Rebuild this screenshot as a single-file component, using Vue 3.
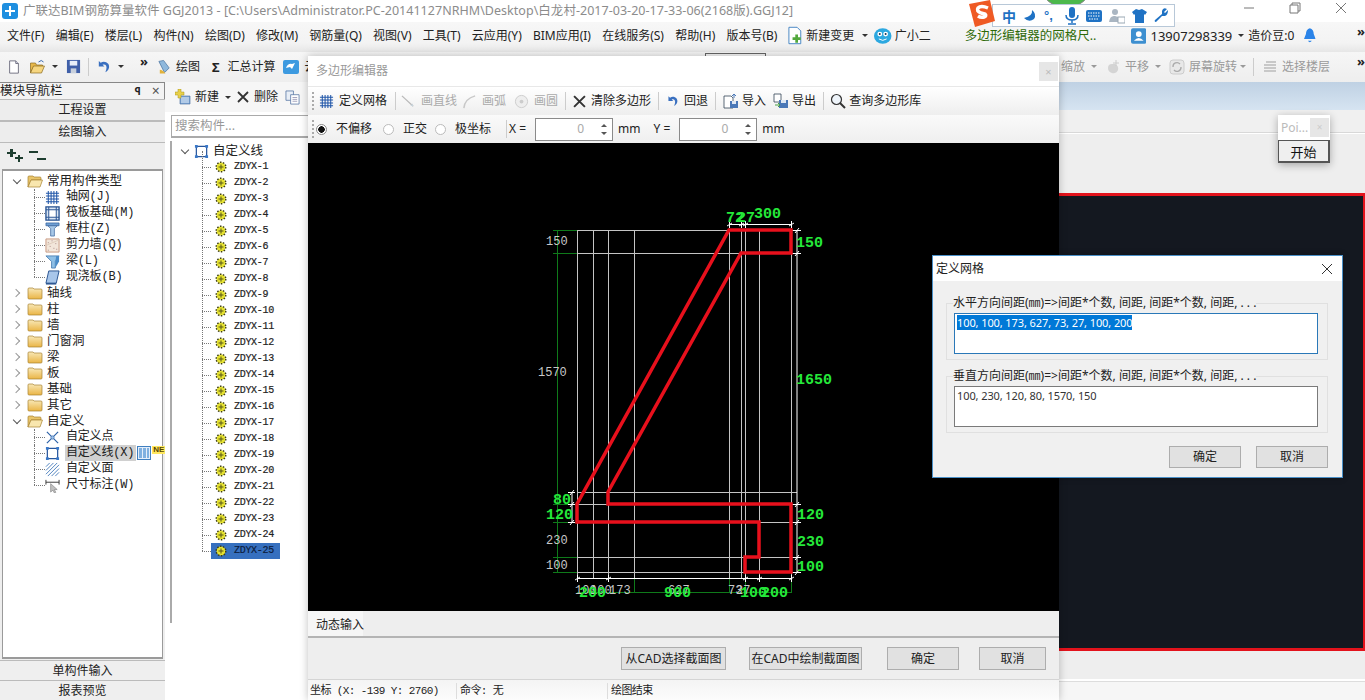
<script setup>
const menus = ["文件(F)", "编辑(E)", "楼层(L)", "构件(N)", "绘图(D)", "修改(M)", "钢筋量(Q)", "视图(V)", "工具(T)", "云应用(Y)", "BIM应用(I)", "在线服务(S)", "帮助(H)", "版本号(B)"]

const typeChildren = [
  { icon: "i-grid", label: "轴网(J)" },
  { icon: "i-raft", label: "筏板基础(M)" },
  { icon: "i-column", label: "框柱(Z)" },
  { icon: "i-wall", label: "剪力墙(Q)" },
  { icon: "i-beam", label: "梁(L)" },
  { icon: "i-slab", label: "现浇板(B)" },
]
const folders = ["轴线", "柱", "墙", "门窗洞", "梁", "板", "基础", "其它"]
const customChildren = [
  { icon: "i-point", label: "自定义点" },
  { icon: "i-poly", label: "自定义线(X)", active: true },
  { icon: "i-hatch", label: "自定义面" },
  { icon: "i-dim", label: "尺寸标注(W)" },
]
const parts = Array.from({ length: 25 }, (_, i) => `ZDYX-${i + 1}`)

const gridX = [577, 593, 608, 634, 729, 741, 745, 759, 791]
const gridY = [230, 253, 492, 504, 522, 557, 572]
const polygon = "729,230 791,230 791,253 741,253 608,492 608,504 791,504 791,572 745,572 745,557 759,557 759,522 577,522 577,504 729,230"
const greenV = [634, 729, 745, 791]
const greenH = [230, 253, 504, 522, 557, 572]
const ticksTop = [729, 741, 745, 791]
const ticksBottom = [577, 608, 745, 759, 791]
const ticksRight = [230, 253, 504, 522, 557, 572]
const ticksLeft = [492, 504, 522]
const grayLabels = [
  { x: 546, y: 245, t: "150" },
  { x: 538, y: 376, t: "1570" },
  { x: 546, y: 544, t: "230" },
  { x: 546, y: 569, t: "100" },
  { x: 575, y: 594, t: "100" },
  { x: 590, y: 594, t: "100" },
  { x: 609, y: 594, t: "173" },
  { x: 668, y: 594, t: "627" },
  { x: 728, y: 594, t: "73" },
  { x: 736, y: 594, t: "27" },
]
const greenLabels = [
  { x: 726, y: 222, t: "72" },
  { x: 737, y: 222, t: "27" },
  { x: 754, y: 218, t: "300" },
  { x: 796, y: 247, t: "150" },
  { x: 796, y: 384, t: "1650" },
  { x: 797, y: 519, t: "120" },
  { x: 797, y: 546, t: "230" },
  { x: 797, y: 571, t: "100" },
  { x: 553, y: 504, t: "80" },
  { x: 546, y: 519, t: "120" },
  { x: 579, y: 597, t: "200" },
  { x: 664, y: 597, t: "900" },
  { x: 740, y: 597, t: "100" },
  { x: 761, y: 597, t: "200" },
]
</script>

<template>
  <div class="app">
    <svg class="defs" width="0" height="0">
      <defs>
        <symbol id="i-new" viewBox="0 0 16 16"><path d="M3 1h7l3 3v11H3z" fill="#fff" stroke="#667" /><path d="M10 1v3h3" fill="#dde" stroke="#667" /></symbol>
        <symbol id="i-open" viewBox="0 0 16 16"><path d="M1 4h5l1 2h6v2H4L1 14z" fill="#e8b84a" stroke="#8a6a20" stroke-width=".7" /><path d="M1 14l3-7h11l-3 7z" fill="#f6d680" stroke="#8a6a20" stroke-width=".7" /><path d="M9 3q3-3 5 0" fill="none" stroke="#3a6ab0" /></symbol>
        <symbol id="i-save" viewBox="0 0 16 16"><path d="M1 1h14v14H1z" fill="#3f5fa8" /><path d="M4 2h8v5H4z" fill="#e8eef8" /><path d="M5 10h6v5H5z" fill="#c8d0dc" /></symbol>
        <symbol id="i-undo" viewBox="0 0 16 16"><path d="M3 2v6h6L7 6c3-1 5 1 4 5l-1 3c4-2 5-6 3-9-2-2-5-3-8-1z" fill="#3a70c0" /></symbol>
        <symbol id="i-paint" viewBox="0 0 16 16"><path d="M2 2l5-1 6 8-5 5z" fill="#8fb8dc" stroke="#3d6a98" stroke-width=".7" /><path d="M3 11q3 0 6 4H3z" fill="#e2b23a" /></symbol>
        <symbol id="i-cloud" viewBox="0 0 16 16"><rect x="0" y="1" width="16" height="14" rx="2" fill="#3d9ae0" /><path d="M3 9q2-5 6-4l3-1-3 6-2-2z" fill="#fff" /></symbol>
        <symbol id="i-grid" viewBox="0 0 16 16"><path d="M1 3.500h14M1 6.500h14M1 9.500h14M1 12.500h14M3.500 1v14M6.500 1v14M9.500 1v14M12.500 1v14" stroke="#1f55a8" stroke-width="1.100" fill="none" /></symbol>
        <symbol id="i-raft" viewBox="0 0 16 16"><path d="M1 1h14v14H1z" fill="#dbe6f3" stroke="#234f90" stroke-width="1.400" /><path d="M4 4h8v8H4z" fill="#fff" stroke="#234f90" /><path d="M1 4h3M12 4h3M1 12h3M12 12h3M4 1v3M12 1v3M4 12v3M12 12v3" stroke="#234f90" /></symbol>
        <symbol id="i-column" viewBox="0 0 16 16"><path d="M1 1h14v3H1z" fill="#6f9fd4" stroke="#2c5a96" stroke-width=".7" /><path d="M3 4h10l-3 3v8H6V7z" fill="#a8c8e8" stroke="#2c5a96" stroke-width=".7" /></symbol>
        <symbol id="i-wall" viewBox="0 0 16 16"><path d="M1 1h14v14H1z" fill="#f2e6da" stroke="#c89880" /><path d="M3 5h1M7 3h1M11 6h1M5 9h1M9 11h1M3 13h1M12 12h1" stroke="#a88" /><path d="M1 8l14-6" stroke="#dcb" /></symbol>
        <symbol id="i-beam" viewBox="0 0 16 16"><path d="M1 2l14 0-4 6v7H7V8z" fill="#8fc0e6" stroke="#3870a8" stroke-width=".8" /><path d="M12 2l3 0v6l-4 7V8z" fill="#4a8cc8" /></symbol>
        <symbol id="i-slab" viewBox="0 0 16 16"><path d="M4 1h11l-3 13H1z" fill="#a8c6ea" stroke="#24508e" /><path d="M1 14h11v1.500H1z" fill="#24508e" /></symbol>
        <symbol id="i-folder" viewBox="0 0 16 14"><path d="M1 3q0-1 1-1h4l1 1h7q1 0 1 1v8q0 1-1 1H2q-1 0-1-1z" fill="url(#fold)" stroke="#a88330" stroke-width=".7" /></symbol>
        <symbol id="i-folder-open" viewBox="0 0 16 14"><path d="M1 3q0-1 1-1h4l1 1h6q1 0 1 1v2H4l-3 7z" fill="#e9c56a" stroke="#a88330" stroke-width=".7" /><path d="M1 13l3-7h11.500L13 13z" fill="#f8e6ae" stroke="#a88330" stroke-width=".7" /></symbol>
        <symbol id="i-gear" viewBox="0 0 12 12"><circle cx="6" cy="6" r="4.500" fill="#e6e230" /><circle cx="6" cy="6" r="4.800" fill="none" stroke="#3c3c10" stroke-width="1.400" stroke-dasharray="1.500 1.500" /><path d="M3.500 6h5M6 3.500v5" stroke="#55551a" stroke-width="1" /></symbol>
        <symbol id="i-point" viewBox="0 0 16 16"><path d="M2 2l12 12M14 2L2 14" stroke="#2d62a8" stroke-width="1.300" /><circle cx="8" cy="8" r="1.800" fill="#9cc0e8" stroke="#2d62a8" stroke-width=".6" /></symbol>
        <symbol id="i-poly" viewBox="0 0 16 16"><path d="M2.500 2.500h11v11h-11z" fill="none" stroke="#26559c" stroke-width="1.300" /><path d="M1 1h3v3H1zM12 1h3v3h-3zM1 12h3v3H1zM12 12h3v3h-3z" fill="#3a78c8" /></symbol>
        <symbol id="i-hatch" viewBox="0 0 16 16"><path d="M1 5l4-4M1 9l8-8M1 13L13 1M3 15L15 3M7 15l8-8M11 15l4-4" stroke="#4a7ebc" fill="none" /></symbol>
        <symbol id="i-dim" viewBox="0 0 16 16"><path d="M1 2v5M15 2v5M1 4.500h14" stroke="#333" fill="none" /><path d="M6 6l0 9 2.500-2 1.500 3 1.500-.7-1.500-3H13z" fill="#c0c0c0" stroke="#777" stroke-width=".6" /></symbol>
        <symbol id="i-line" viewBox="0 0 16 16"><path d="M1 2l12 11" stroke="#b8b8b8" stroke-width="1.300" /><path d="M13 13l-3-.5 2.500-2.500z" fill="#c8d4dc" /></symbol>
        <symbol id="i-arc" viewBox="0 0 16 16"><path d="M2 15Q3 5 14 2" fill="none" stroke="#c8c8c8" stroke-width="1.600" /></symbol>
        <symbol id="i-circle" viewBox="0 0 16 16"><circle cx="8" cy="8" r="6.500" fill="#eee" stroke="#ccc" /><circle cx="8" cy="8" r="2" fill="#ccc" /></symbol>
        <symbol id="i-x" viewBox="0 0 12 12"><path d="M1 1l10 10M11 1L1 11" stroke="#333" stroke-width="1.800" /></symbol>
        <symbol id="i-import" viewBox="0 0 16 16"><path d="M1 3h7l2 2v10H1z" fill="#fff" stroke="#345" stroke-width=".8" /><path d="M7 8h8v7H7z" fill="#4a78b8" /><path d="M9 8h4v3H9z" fill="#dfe8f4" /><path d="M11 5V1M9 3l2-2 2 2" fill="none" stroke="#4a78b8" /></symbol>
        <symbol id="i-export" viewBox="0 0 16 16"><path d="M1 1h7v8H1z" fill="#fff" stroke="#345" stroke-width=".8" /><path d="M6 7h9v8H6z" fill="#4a78b8" /><path d="M8 7h5v3H8z" fill="#dfe8f4" /><path d="M2 12h4M5 10l2 2-2 2" fill="none" stroke="#48a048" /></symbol>
        <symbol id="i-search" viewBox="0 0 16 16"><circle cx="6.500" cy="6.500" r="5" fill="#eef4fa" stroke="#333" stroke-width="1.200" /><path d="M10 10l5 5" stroke="#333" stroke-width="2" /></symbol>
        <symbol id="i-add" viewBox="0 0 16 16"><path d="M5 7h10v8H5z" fill="#7fa8d8" stroke="#44699c" stroke-width=".6" /><path d="M6 9h8M6 11h8M6 13h8" stroke="#fff" stroke-width=".8" /><path d="M3 0h3v3h3v3H6v3H3V6H0V3h3z" fill="#e8d04a" stroke="#a89420" stroke-width=".5" /></symbol>
        <symbol id="i-copy" viewBox="0 0 16 16"><path d="M1 1h8v10H1z" fill="#e8eef6" stroke="#5070a0" stroke-width=".8" /><path d="M6 5h9v10H6z" fill="#fff" stroke="#5070a0" stroke-width=".8" /><path d="M8 8h5M8 10h5M8 12h5" stroke="#88a" stroke-width=".8" /></symbol>
        <symbol id="i-change" viewBox="0 0 16 20"><path d="M1 1h9l4 4v14H1z" fill="#fff" stroke="#3d7fc0" /><path d="M5 12h3V9h3v3h3v3h-3v3H8v-3H5z" fill="#52a83c" /></symbol>
        <symbol id="i-mascot" viewBox="0 0 20 18"><ellipse cx="10" cy="9" rx="9" ry="8" fill="#2ca8e0" /><circle cx="7" cy="7" r="2.500" fill="#fff" /><circle cx="13" cy="7" r="2.500" fill="#fff" /><circle cx="7" cy="7" r="1" fill="#135" /><circle cx="13" cy="7" r="1" fill="#135" /><path d="M6 12q4 3 8 0" fill="none" stroke="#fff" /></symbol>
        <symbol id="i-user" viewBox="0 0 16 16"><rect width="16" height="16" rx="2" fill="#3d8fd0" /><circle cx="8" cy="6" r="3" fill="#fff" /><path d="M3 13q5-6 10 0z" fill="#fff" /></symbol>
        <symbol id="i-bell" viewBox="0 0 12 16"><path d="M6 0q4 1 4 6l2 5H0l2-5q0-5 4-6z" fill="#2b84e8" /><path d="M4 13q2 3 4 0z" fill="#2b84e8" /></symbol>
        <symbol id="i-pan" viewBox="0 0 16 16"><path d="M3 9q0-4 4-4l3 0q4 2 3 6-2 4-6 3-4-1-4-5z" fill="#d4d4d4" /><path d="M11 1v6M8 4h6" stroke="#ccc" /></symbol>
        <symbol id="i-rotate" viewBox="0 0 16 16"><rect x="1" y="1" width="14" height="14" rx="3" fill="#e8e8e8" stroke="#ccc" /><path d="M4 8a4 4 0 0 1 7-3M12 8a4 4 0 0 1-7 3" fill="none" stroke="#aaa" stroke-width="1.300" /></symbol>
        <symbol id="i-floors" viewBox="0 0 16 16"><path d="M4 3h10M2 6h12M2 9h12M2 12h12" stroke="#bbb" stroke-width="1.600" /></symbol>
        <linearGradient id="fold" x1="0" y1="0" x2="0" y2="1"><stop offset="0" stop-color="#f8e8b8" /><stop offset="1" stop-color="#eab545" /></linearGradient>
      </defs>
    </svg>

    <header class="titlebar">
      <span class="app-logo"><svg viewBox="0 0 16 16" width="16" height="16"><rect width="16" height="16" rx="3" fill="#1f8fe0" /><path d="M7 3h2v4h4v2H9v4H7V9H3V7h4z" fill="#fff" /></svg></span>
      <span class="title-text">广联达BIM钢筋算量软件 GGJ2013 - [C:\Users\Administrator.PC-20141127NRHM\Desktop\白龙村-2017-03-20-17-33-06(2168版).GGJ12]</span>
    </header>

    <nav class="menubar">
      <span v-for="m in menus" :key="m" class="menu-item">{{ m }}</span>
      <svg class="ico-change" width="15" height="19"><use href="#i-change" /></svg>
      <span class="menu-item change-label">新建变更</span>
      <span class="caret dark"></span>
      <svg class="ico-mascot" width="20" height="18"><use href="#i-mascot" /></svg>
      <span class="menu-item xiao">广小二</span>
      <span class="hint">多边形编辑器的网格尺..</span>
      <svg class="ico-user" width="16" height="16"><use href="#i-user" /></svg>
      <span class="phone">13907298339</span>
      <span class="caret dark"></span>
      <span class="beans">造价豆:0</span>
      <svg class="ico-bell" width="12" height="16"><use href="#i-bell" /></svg>
      <span class="more">»</span>
    </nav>

    <div class="toolbar">
      <div class="t-left">
        <svg class="t-new" width="14" height="16"><use href="#i-new" /></svg>
        <svg class="t-open" width="17" height="16"><use href="#i-open" /></svg>
        <span class="caret dark t-c1"></span>
        <svg class="t-save" width="15" height="15"><use href="#i-save" /></svg>
        <i class="vsep t-sep"></i>
        <svg class="t-undo" width="15" height="15"><use href="#i-undo" /></svg>
        <span class="caret dark t-c2"></span>
        <span class="more t-more">»</span>
        <svg class="t-paint" width="15" height="16"><use href="#i-paint" /></svg>
        <span class="t-draw">绘图</span>
        <b class="t-sigma">Σ</b>
        <span class="t-sum">汇总计算</span>
        <svg class="t-cloud" width="16" height="16"><use href="#i-cloud" /></svg>
        <span class="t-yun">云</span>
      </div>
      <div class="t-right">
        <span class="zoomtxt">缩放</span><span class="caret"></span>
        <svg class="r-pan" width="16" height="16"><use href="#i-pan" /></svg>
        <span>平移</span><span class="caret"></span>
        <svg class="r-rot" width="16" height="16"><use href="#i-rotate" /></svg>
        <span class="r-rtxt">屏幕旋转</span><span class="caret r-rc"></span>
        <i class="vsep r-sep"></i>
        <svg width="16" height="16"><use href="#i-floors" /></svg>
        <span class="r-ftxt">选择楼层</span>
        <span class="more r-more">»</span>
      </div>
    </div>

    <main class="body">
      <aside class="nav">
        <div class="nav-title">
          <span>模块导航栏</span>
          <span class="pin">ꟼ</span>
          <span class="nav-x">×</span>
        </div>
        <div class="nav-btn first">工程设置</div>
        <div class="nav-btn">绘图输入</div>
        <div class="tree-tools">
          <svg width="19" height="16" viewBox="0 0 19 16"><path d="M3 1h3v3h3v2H6v3H3V6H0V4h3zM11 7h2v2h3v2h-3v3h-2v-3H8V9h3z" fill="#1e3e30" /></svg>
          <svg class="minus" width="19" height="16" viewBox="0 0 19 16"><path d="M0 3h9v2H0zM8 10h9v2H8z" fill="#1e3e30" /></svg>
        </div>
        <div class="tree">
          <div class="node">
            <span class="chev open"></span>
            <svg class="folder" width="16" height="14"><use href="#i-folder-open" /></svg>
            <span class="node-label">常用构件类型</span>
          </div>
          <div v-for="(c, i) in typeChildren" :key="c.label" class="leaf" :class="{ last: i === typeChildren.length - 1 }">
            <svg class="leaf-ico" width="15" height="15"><use :href="'#' + c.icon" /></svg>
            <span class="leaf-label">{{ c.label }}</span>
          </div>
          <div v-for="f in folders" :key="f" class="node">
            <span class="chev"></span>
            <svg class="folder" width="16" height="14"><use href="#i-folder" /></svg>
            <span class="node-label">{{ f }}</span>
          </div>
          <div class="node">
            <span class="chev open"></span>
            <svg class="folder" width="16" height="14"><use href="#i-folder-open" /></svg>
            <span class="node-label">自定义</span>
          </div>
          <div v-for="(c, i) in customChildren" :key="c.label" class="leaf" :class="{ last: i === customChildren.length - 1 }">
            <svg class="leaf-ico" width="15" height="15"><use :href="'#' + c.icon" /></svg>
            <span class="leaf-label" :class="{ active: c.active }">{{ c.label }}</span>
            <template v-if="c.active">
              <span class="tag-grid"><i></i><i></i><i></i></span>
              <span class="tag-new">NE</span>
            </template>
          </div>
        </div>
        <div class="nav-btn bottom">单构件输入</div>
        <div class="nav-btn bottom">报表预览</div>
      </aside>

      <section class="parts">
        <div class="parts-tools">
          <svg width="16" height="16"><use href="#i-add" /></svg>
          <span class="p-new">新建</span><span class="caret dark"></span>
          <svg class="p-x" width="12" height="12"><use href="#i-x" /></svg>
          <span class="p-del">删除</span>
          <svg class="p-copy" width="15" height="15"><use href="#i-copy" /></svg>
        </div>
        <div class="search">搜索构件...</div>
        <div class="list">
          <div class="list-root">
            <span class="chev open"></span>
            <svg class="root-ico" width="15" height="15"><use href="#i-poly" /></svg>
            <span class="node-label">自定义线</span>
          </div>
          <div v-for="(p, i) in parts" :key="p" class="part">
            <span class="part-body" :class="{ sel: i === parts.length - 1 }">
              <svg class="gear" width="12" height="12"><use href="#i-gear" /></svg>
              <span class="part-label">{{ p }}</span>
            </span>
          </div>
        </div>
      </section>

      <section class="work">
        <div class="blue-band"></div>
        <div class="work-strip"></div>
        <div class="work-gap"></div>
        <div class="viewport"></div>
        <div class="work-foot"></div>
        <div class="work-status"></div>
      </section>
    </main>

    <!-- 悬浮窗口 -->
    <div class="tab-peek"></div>
    <div class="shield"></div>

    <div class="poly-win">
      <div class="pw-title">
        <span>多边形编辑器</span>
        <span class="pw-close">×</span>
      </div>
      <div class="pw-tools">
        <i class="grip"></i>
        <svg width="15" height="15"><use href="#i-grid" /></svg>
        <span class="w48 ml5">定义网格</span>
        <i class="vsep ml8"></i>
        <svg class="ml5" width="15" height="15"><use href="#i-line" /></svg>
        <span class="off ml5">画直线</span>
        <svg class="ml5" width="15" height="15"><use href="#i-arc" /></svg>
        <span class="off ml5">画弧</span>
        <svg class="ml8" width="15" height="15"><use href="#i-circle" /></svg>
        <span class="off ml5">画圆</span>
        <i class="vsep ml7"></i>
        <svg class="ml7" width="13" height="13"><use href="#i-x" /></svg>
        <span class="ml5">清除多边形</span>
        <i class="vsep ml7"></i>
        <svg class="ml7" width="13" height="14"><use href="#i-undo" /></svg>
        <span class="ml5">回退</span>
        <i class="vsep ml7"></i>
        <svg class="ml7" width="16" height="16"><use href="#i-import" /></svg>
        <span class="ml3">导入</span>
        <svg class="ml7" width="16" height="16"><use href="#i-export" /></svg>
        <span class="ml3">导出</span>
        <i class="vsep ml7"></i>
        <svg class="ml6" width="16" height="16"><use href="#i-search" /></svg>
        <span class="ml3">查询多边形库</span>
      </div>
      <div class="pw-opts">
        <i class="grip"></i>
        <span class="radio on"></span><span class="opt a">不偏移</span>
        <span class="radio"></span><span class="opt b">正交</span>
        <span class="radio"></span><span class="opt c">极坐标</span>
        <i class="vsep sep-x"></i>
        <span class="lbl-x">X =</span>
        <span class="spin"><em>0</em><span class="spin-btns"><i class="up"></i><i class="down"></i></span></span>
        <span class="unit">mm</span>
        <span class="lbl-y">Y =</span>
        <span class="spin"><em>0</em><span class="spin-btns"><i class="up"></i><i class="down"></i></span></span>
        <span class="unit">mm</span>
      </div>
      <svg class="canvas" viewBox="308 143 751 468" width="751" height="468">
        <g stroke="#0f7a1a" fill="none">
          <path d="M557.500 230v342" />
          <path v-for="y in greenH" :key="'gh' + y" :d="`M553 ${y + 0.5}H577`" />
          <path d="M577 592.500H791" />
          <path v-for="x in greenV" :key="'gv' + x" :d="`M${x + 0.5} 578V593`" />
        </g>
        <g stroke="#c4c4c4" fill="none">
          <path v-for="x in gridX" :key="'x' + x" :d="`M${x + 0.5} 230V578`" />
          <path v-for="y in gridY" :key="'y' + y" :d="`M577 ${y + 0.5}H797`" />
        </g>
        <g stroke="#fff" fill="none">
          <path d="M729 224.500H791M577 578.500H791M797 230V572M572 492V522" />
          <path v-for="x in ticksTop" :key="'tt' + x" :d="`M${x + 0.5} 221V228M${x - 2} 226L${x + 3} 223`" />
          <path v-for="x in ticksBottom" :key="'tb' + x" :d="`M${x + 0.5} 575V582M${x - 2} 580L${x + 3} 577`" />
          <path v-for="y in ticksRight" :key="'tr' + y" :d="`M793 ${y + 0.5}H801M795 ${y + 3}L799 ${y - 2}`" />
          <path v-for="y in ticksLeft" :key="'tl' + y" :d="`M568 ${y + 0.5}H575M570 ${y + 3}L574 ${y - 2}`" />
        </g>
        <polygon :points="polygon" fill="none" stroke="#e8101c" stroke-width="3.500" stroke-linejoin="miter" />
        <text v-for="l in grayLabels" :key="'g' + l.x + l.y" :x="l.x" :y="l.y" class="dim-gray">{{ l.t }}</text>
        <text v-for="l in greenLabels" :key="'n' + l.x + l.y" :x="l.x" :y="l.y" class="dim-green">{{ l.t }}</text>
      </svg>
      <div class="pw-tabs"><span class="tab">动态输入</span></div>
      <div class="pw-actions">
        <button class="btn cad1">从CAD选择截面图</button>
        <button class="btn cad2">在CAD中绘制截面图</button>
        <button class="btn ok">确定</button>
        <button class="btn cancel">取消</button>
      </div>
      <div class="pw-status">
        <span class="st-a">坐标 (X: -139 Y: 2760)</span>
        <span class="st-b">命令: 无</span>
        <span class="st-c">绘图结束</span>
      </div>
    </div>

    <div class="poi-win">
      <div class="poi-title"><span>Poi...</span><span class="poi-x">×</span></div>
      <button class="poi-btn">开始</button>
    </div>

    <div class="grid-win">
      <div class="gw-title">
        <span>定义网格</span>
        <svg width="12" height="12" viewBox="0 0 12 12"><path d="M1 1l10 10M11 1L1 11" stroke="#333" stroke-width="1" fill="none" /></svg>
      </div>
      <div class="gw-body">
        <fieldset class="group">
          <legend>水平方向间距(㎜)=&gt;间距*个数, 间距, 间距*个数, 间距, . . .</legend>
          <div class="field focus"><span class="selected">100, 100, 173, 627, 73, 27, 100, 200</span></div>
        </fieldset>
        <fieldset class="group second">
          <legend>垂直方向间距(㎜)=&gt;间距*个数, 间距, 间距*个数, 间距, . . .</legend>
          <div class="field"><span>100, 230, 120, 80, 1570, 150</span></div>
        </fieldset>
        <div class="gw-actions">
          <button class="btn gw-btn">确定</button>
          <button class="btn gw-btn">取消</button>
        </div>
      </div>
    </div>

    <div class="ime">
      <svg class="ime-s" width="28" height="28" viewBox="0 0 28 28"><path d="M1 4l21-4 5 21-20 6z" fill="#ef5a24" /><path d="M20 8q-7-3-10 0-2 3 3 5l4 1q2 2-1 3-3 1-6-1" fill="none" stroke="#fff" stroke-width="3.500" /></svg>
      <div class="ime-bar">
        <b class="ime-zh">中</b>
        <svg width="14" height="14" viewBox="0 0 14 14"><path d="M9 1q1 6-8 8 5 5 10 1 3-5-2-9z" fill="#1f72c4" /></svg>
        <span class="ime-dot">°,</span>
        <svg width="14" height="18" viewBox="0 0 14 18"><rect x="4" y="0" width="6" height="11" rx="3" fill="#1f72c4" /><path d="M1 8q0 5 6 5t6-5M7 13v3M3 17h8" fill="none" stroke="#1f72c4" stroke-width="1.500" /></svg>
        <svg width="16" height="12" viewBox="0 0 16 12"><rect width="16" height="12" rx="2" fill="#1f72c4" /><path d="M2 3h12M2 6h12M3 9h10" stroke="#fff" stroke-dasharray="1.500 1" /></svg>
        <svg width="16" height="16" viewBox="0 0 16 16"><circle cx="6" cy="4" r="3" fill="#aab6c2" /><path d="M0 14q1-7 6-6l3 1v5z" fill="#aab6c2" /><rect x="9" y="9" width="7" height="6" fill="#fff" stroke="#9aa8b4" /></svg>
        <svg width="15" height="14" viewBox="0 0 15 14"><path d="M4 0l3 1 3-1 5 3-2 3-1-1v9H3V5L2 6 0 3z" fill="#1f72c4" /></svg>
        <svg width="15" height="15" viewBox="0 0 15 15"><path d="M14 2l-3 3-1-1 3-3q-4-2-5 2v3L1 12q-1 2 1 2l6-6h3q3-1 3-6z" fill="#1f72c4" /></svg>
      </div>
    </div>

    <div class="winctl">
      <svg width="12" height="12" viewBox="0 0 12 12"><path d="M1 6h10" stroke="#777" /></svg>
      <svg width="12" height="12" viewBox="0 0 12 12"><path d="M3 3V1h8v8H9M1 3h8v8H1z" stroke="#777" fill="none" /></svg>
      <svg width="12" height="12" viewBox="0 0 12 12"><path d="M1 1l10 10M11 1L1 11" stroke="#777" fill="none" /></svg>
    </div>
  </div>
</template>

<style scoped>
.app {
  position: relative;
  width: 1365px;
  height: 700px;
  overflow: hidden;
  background: #eee;
  color: #222;
  font: 12px "Noto Sans", "Noto Sans CJK SC", sans-serif;
  line-height: 16px;
}
.defs { position: absolute; }

.titlebar {
  display: flex;
  align-items: center;
  height: 22px;
  padding-left: 2px;
  background: #fff;
}
.app-logo { display: flex; margin-right: 5px; }
.title-text { color: #8c8c8c; font-size: 12.5px; letter-spacing: 0.03px; white-space: nowrap; }

.menubar {
  display: flex;
  align-items: center;
  height: 30px;
  padding: 0 0 3px 7px;
  box-sizing: border-box;
  white-space: nowrap;
  background: linear-gradient(#f7f7f7, #f3f3f3 70%, #e6e6e6);
}
.menu-item { margin-right: 11.2px; white-space: nowrap; }
.ico-change { margin: 0 4px 0 -1px; }
.change-label { margin-right: 2px; }
.ico-mascot { margin: 0 2px 0 5px; }
.xiao { margin: 0; }
.hint { margin-left: 34px; width: 171px; color: #2e6a08; font-size: 12.5px; white-space: nowrap; }
.phone { margin-left: 4px; font-size: 13px; }
.beans { margin-left: 4px; }
.ico-bell { margin-left: 10px; }
.menubar .more { margin-left: 41px; }
.caret {
  display: inline-block;
  width: 0;
  height: 0;
  margin-left: 6px;
  border-left: 3px solid transparent;
  border-right: 3px solid transparent;
  border-top: 3px solid #999;
}
.caret.dark { border-top-color: #333; }
.more { font-weight: 700; font-size: 13px; line-height: 10px; align-self: flex-start; margin-top: 4px; color: #222; }

.toolbar {
  display: flex;
  height: 30px;
  white-space: nowrap;
  background: linear-gradient(#f6f6f6, #eee);
}
.t-left { display: flex; align-items: center; width: 1061px; flex: none; box-sizing: border-box; padding: 0 0 1px 7px; }
.t-open { margin-left: 8px; }
.t-c1 { margin-left: 6px; }
.t-save { margin-left: 8px; }
.t-sep { margin-left: 7px; height: 24px; }
.t-undo { margin-left: 7px; }
.t-c2 { margin-left: 7px; }
.t-more { margin-left: 16px; }
.t-paint { margin-left: 9px; }
.t-draw { margin-left: 4px; font-size: 12px; }
.t-sigma { margin-left: 12px; font-size: 13px; }
.t-sum { margin-left: 8px; }
.t-cloud { margin-left: 7px; }
.t-yun { margin-left: 6px; }
.t-right {
  display: flex;
  align-items: center;
  padding-bottom: 1px;
  color: #9a9a9a;
}
.r-pan { margin: 0 4px 0 8px; }
.r-rot { margin: 0 4px 0 8px; }
.r-rc { margin-left: 3px; }
.r-sep { margin: 0 8px 0 7px; height: 16px; }
.r-ftxt { margin-left: 4px; }
.r-more { margin-left: 27px; }

.vsep { display: inline-block; width: 1px; height: 18px; background: #ccc; }

.body { display: flex; height: 618px; }

.nav { display: flex; flex-direction: column; width: 165px; flex: none; }
.nav-title {
  display: flex;
  align-items: center;
  height: 16px;
  border: 1px solid #888;
  border-width: 1px 1px 0 0;
  background: #f3f3f3;
  font-size: 12.5px;
}
.pin { margin-left: 72px; font-size: 10px; font-weight: 700; }
.nav-x { margin-left: 11px; font-size: 14px; color: #555; }
.nav-btn {
  height: 22px;
  box-sizing: border-box;
  line-height: 20px;
  text-align: center;
  background: #ededed;
  border: 1px solid #bbb;
  border-width: 1px 0;
}
.nav-btn.bottom { height: 20px; line-height: 20px; background: #efefef; border-bottom-width: 0; }
.tree-tools { display: flex; align-items: center; height: 26px; padding-left: 7px; background: #eee; }
.minus { margin-left: 3px; }
.tree {
  flex: 1;
  margin: 0 2px 1px 2px;
  padding-top: 2px;
  border: 2px solid #9a9a9a;
  border-width: 2px 1px 2px 1px;
  background: #fff;
}
.node, .leaf, .list-root, .part { position: relative; display: flex; align-items: center; height: 16px; white-space: nowrap; }
.node { padding-left: 10px; }
.chev { display: inline-block; flex: none; width: 5px; height: 5px; border: solid #999; border-width: 1.500px 1.500px 0 0; transform: rotate(45deg); }
.chev.open { border-color: #555; transform: translate(1px, -1px) rotate(135deg); }
.folder { margin-left: 8px; flex: none; }
.node-label { margin-left: 4px; font-size: 12.500px; }
.leaf { padding-left: 42px; font-family: "Liberation Mono", "Noto Sans CJK SC", monospace; }
.leaf::before { content: ""; position: absolute; left: 31px; top: 0; bottom: 0; border-left: 1px dotted #777; }
.leaf.last::before { bottom: 8px; }
.leaf::after { content: ""; position: absolute; left: 31px; top: 8px; width: 11px; border-top: 1px dotted #777; }
.leaf-ico { flex: none; }
.leaf-label { margin-left: 5px; padding: 0 2px 0 1px; font-size: 12px; letter-spacing: -0.2px; }
.leaf-label.active { background: #d0d0d0; }
.tag-grid { display: flex; gap: 1px; margin-left: 1px; padding: 1px; border: 1px solid #3f7fc0; background: #e4eefa; width: 14px; height: 14px; box-sizing: border-box; flex: none; }
.tag-grid i { flex: 1; background: #7fb0e0; }
.tag-new { margin: -6px 0 0 1px; padding: 0 1px; font: 700 8px/8px "Liberation Sans", sans-serif; background: #ffe860; color: #554400; }

.parts { width: 889px; flex: none; padding-left: 5px; box-sizing: border-box; background: #fff; }
.parts-tools { display: flex; align-items: center; height: 30px; margin-left: -5px; padding-left: 10px; background: #f6f6f6; }
.p-new { margin-left: 4px; }
.p-x { margin-left: 6px; }
.p-del { margin-left: 5px; }
.p-copy { margin-left: 7px; }
.search {
  height: 20px;
  margin: 3px 0 0 1px;
  padding-left: 3px;
  line-height: 19px;
  border: 2px solid #aaa;
  border-width: 1px 0 2px 1px;
  background: #fff;
  color: #999;
  font-size: 12.5px;
}
.list { margin-top: 3px; padding-top: 2px; border-left: 2px solid #aaa; height: 480px; }
.list-root { padding-left: 9px; }
.root-ico { margin-left: 7px; flex: none; }
.part { padding-left: 39px; }
.part::before { content: ""; position: absolute; left: 30px; top: -8px; bottom: 8px; border-left: 1px dotted #777; }
.part::after { content: ""; position: absolute; left: 30px; top: 8px; width: 9px; border-top: 1px dotted #777; }
.part-body { display: flex; align-items: center; width: 69px; height: 16px; padding-left: 4px; box-sizing: border-box; }
.part-body.sel { background: #3670bf; }
.gear { flex: none; }
.part-label {
  margin-left: 7px;
  font: 10px/16px "Liberation Mono", monospace;
  letter-spacing: -0.3px;
  color: #222;
  -webkit-text-stroke: 0.2px #222;
}
.sel .part-label { color: #0c1c3c; -webkit-text-stroke-color: #0c1c3c; }

.work { flex: 1; display: flex; flex-direction: column; min-width: 0; background: #eee; }
.blue-band { height: 28px; background: linear-gradient(#bfd1e3, #d6e4f1); }
.work-strip { height: 22px; background: #f0f0f0; border-bottom: 1px solid #d8d8d8; }
.work-gap { height: 60px; box-shadow: inset 0 1px #fff; }
.viewport { height: 452px; border: 3px solid #e3131c; border-width: 3px 2px 3px 0; background: #141820; }
.work-foot { height: 28px; border-bottom: 2px solid #fff; }
.work-status { flex: 1; background: #f6f6f6; border-top: 1px solid #ddd; }

.tab-peek { position: absolute; left: 705px; top: 53px; width: 61px; height: 3px; border: 1px solid #666; border-bottom: 0; box-sizing: border-box; background: #f4f4f4; }
.shield { position: absolute; left: 1043px; top: -14px; width: 44px; height: 18px; border-radius: 0 0 16px 16px; background: #4cb84c; border: 1px solid #888; }

.poly-win {
  position: absolute;
  left: 308px;
  top: 56px;
  width: 751px;
  height: 644px;
  display: flex;
  flex-direction: column;
  background: #eee;
  box-shadow: 0 0 8px rgba(0, 0, 0, 0.25);
  white-space: nowrap;
}
.pw-title { display: flex; align-items: center; justify-content: space-between; height: 31px; padding-left: 8px; background: #fff; color: #999; border-bottom: 1px solid #e8e8e8; box-sizing: border-box; }
.pw-close { width: 19px; height: 19px; margin-right: 1px; background: #e6e6e6; color: #bbb; text-align: center; font-size: 11px; line-height: 19px; }
.pw-tools { display: flex; align-items: center; height: 28px; padding-left: 4px; background: linear-gradient(#fff, #eee); }
.grip { width: 2px; height: 18px; margin-right: 3px; border-left: 2px dotted #aaa; flex: none; }
.pw-opts .grip { margin-right: 0; }
.off { color: #aaa; }
.ml3 { margin-left: 3px; }
.ml5 { margin-left: 5px; }
.ml6 { margin-left: 6px; }
.ml7 { margin-left: 7px; }
.ml8 { margin-left: 8px; }
.pw-opts { display: flex; align-items: center; height: 28px; padding-left: 4px; background: linear-gradient(#fafafa, #efefef); }
.radio { width: 11px; height: 11px; border: 1px solid #bbb; border-radius: 50%; box-sizing: border-box; background: #fff; flex: none; }
.radio.on { border-color: #888; background: radial-gradient(circle, #111 0 3px, #fff 3.500px); }
.opt { margin-right: 10px; margin-left: 9px; }
.opt.a { margin-right: 11px; }
.opt.b { margin-right: 8px; }
.opt.c { margin-right: 15px; }
.sep-x { margin-right: 2px; }
.lbl-x { margin-right: 9px; }
.lbl-y { margin: 0 9px 0 13px; }
.unit { margin-left: 5px; }
.spin {
  display: flex;
  align-items: center;
  justify-content: flex-end;
  width: 78px;
  height: 23px;
  box-sizing: border-box;
  border: 1px solid #8a8a8a;
  background: #fff;
}
.spin em { font-style: normal; color: #aaa; margin-right: 12px; }
.spin-btns { display: flex; flex-direction: column; gap: 5px; width: 16px; align-items: center; }
.spin-btns i { width: 0; height: 0; border-left: 3px solid transparent; border-right: 3px solid transparent; }
.spin-btns .up { border-bottom: 3px solid #555; }
.spin-btns .down { border-top: 3px solid #555; }
.canvas { display: block; background: #000; flex: none; }
.dim-gray { font: 12px "Liberation Mono", monospace; fill: #c8c8c8; }
.dim-green { font: 700 15px "Liberation Mono", monospace; fill: #25e83a; }
.pw-tabs { height: 27px; box-sizing: border-box; border-bottom: 2px solid #b4b4b4; flex: none; }
.tab { display: block; width: 55px; height: 25px; padding-left: 8px; box-sizing: border-box; background: #f6f6f6; line-height: 27px; }
.pw-actions { display: flex; align-items: center; height: 42px; border-bottom: 1px solid #d4d4d4; flex: none; box-sizing: border-box; padding-left: 313px; }
.btn {
  height: 23px;
  padding: 0;
  box-sizing: border-box;
  border: 1px solid #adadad;
  background: #e1e1e1;
  color: #222;
  font: 12px "Noto Sans", "Noto Sans CJK SC", sans-serif;
  line-height: 20px;
}
.cad1 { width: 105px; }
.cad2 { width: 113px; margin-left: 23px; }
.ok { width: 72px; margin-left: 25px; }
.cancel { width: 67px; margin-left: 20px; }
.pw-status {
  flex: 1;
  display: flex;
  align-items: center;
  padding-top: 2px;
  background: linear-gradient(#f4f4f4, #fcfcfc);
  font-family: "Liberation Mono", "Noto Sans CJK SC", monospace;
  font-size: 11px;
  letter-spacing: -0.6px;
}
.st-a { width: 146px; padding-left: 2px; border-right: 1px solid #ddd; box-sizing: content-box; }
.st-b { width: 147px; padding-left: 2px; margin-left: 1px; border-right: 1px solid #ddd; }
.st-c { margin-left: 1px; padding-left: 2px; }

.poi-win {
  position: absolute;
  left: 1278px;
  top: 115px;
  width: 52px;
  box-shadow: 0 2px 8px rgba(0, 0, 0, 0.3);
  background: #fff;
}
.poi-title { display: flex; align-items: center; justify-content: space-between; height: 25px; padding-left: 3px; color: #bbb; font-size: 12px; }
.poi-x { width: 19px; height: 19px; margin-right: 1px; background: #e6e6e6; color: #ccc; text-align: center; line-height: 19px; font-size: 10px; }
.poi-btn {
  display: block;
  width: 52px;
  height: 23px;
  padding: 0;
  border: 1px solid #555;
  border-width: 1px 2px 2px 1px;
  background: #efefef;
  color: #111;
  font: 13px "Noto Sans CJK SC", sans-serif;
}

.grid-win {
  position: absolute;
  left: 932px;
  top: 255px;
  width: 411px;
  height: 223px;
  box-sizing: border-box;
  border: 1px solid #4a90c8;
  background: #f0f0f0;
  display: flex;
  flex-direction: column;
  box-shadow: 0 0 6px rgba(0, 0, 0, 0.25);
}
.gw-title { display: flex; align-items: center; justify-content: space-between; height: 25px; padding: 0 9px 0 3px; background: #fff; flex: none; color: #222; }
.gw-body { flex: 1; padding: 22px 14px 0 13px; }
.group { margin: 0; padding: 0 9px 0 7px; height: 57px; box-sizing: border-box; border: 1px solid #e0e0e0; position: relative; }
.group.second { margin-top: 16px; }
.group legend { position: absolute; left: 6px; top: -10px; padding: 0; background: #f0f0f0; font: 12px/18px "Noto Sans", "Noto Sans CJK SC", sans-serif; white-space: nowrap; color: #222; }
.field { margin-top: 9px; height: 41px; box-sizing: border-box; border: 1px solid #7a7a7a; background: #fff; padding: 1px 2px; font: 11px/15px "Noto Sans", sans-serif; letter-spacing: -0.1px; color: #333; white-space: nowrap; }
.field.focus { border-color: #2a78b8; }
.selected { background: #0078d7; color: #fff; }
.gw-actions { display: flex; justify-content: flex-end; gap: 15px; margin-top: 13px; }
.gw-btn { width: 72px; height: 22px; }

.ime { position: absolute; left: 968px; top: 0; display: flex; align-items: flex-start; }
.ime-s { position: relative; z-index: 1; }
.ime-bar {
  display: flex;
  align-items: center;
  gap: 7px;
  width: 183px;
  height: 23px;
  margin: 4px 0 0 -4px;
  padding-left: 9px;
  box-sizing: border-box;
  background: #fff;
  border: 1px solid #b8c8d8;
}
.ime-zh { color: #1f72c4; font: 700 14px "Noto Sans CJK SC", sans-serif; }
.ime-dot { color: #1f72c4; font: 700 13px/10px "Liberation Sans", sans-serif; width: 14px; }

.winctl { position: absolute; right: 18px; top: 2px; display: flex; gap: 34px; }
</style>

<style>
html, body { margin: 0; background: #eee; }
</style>
